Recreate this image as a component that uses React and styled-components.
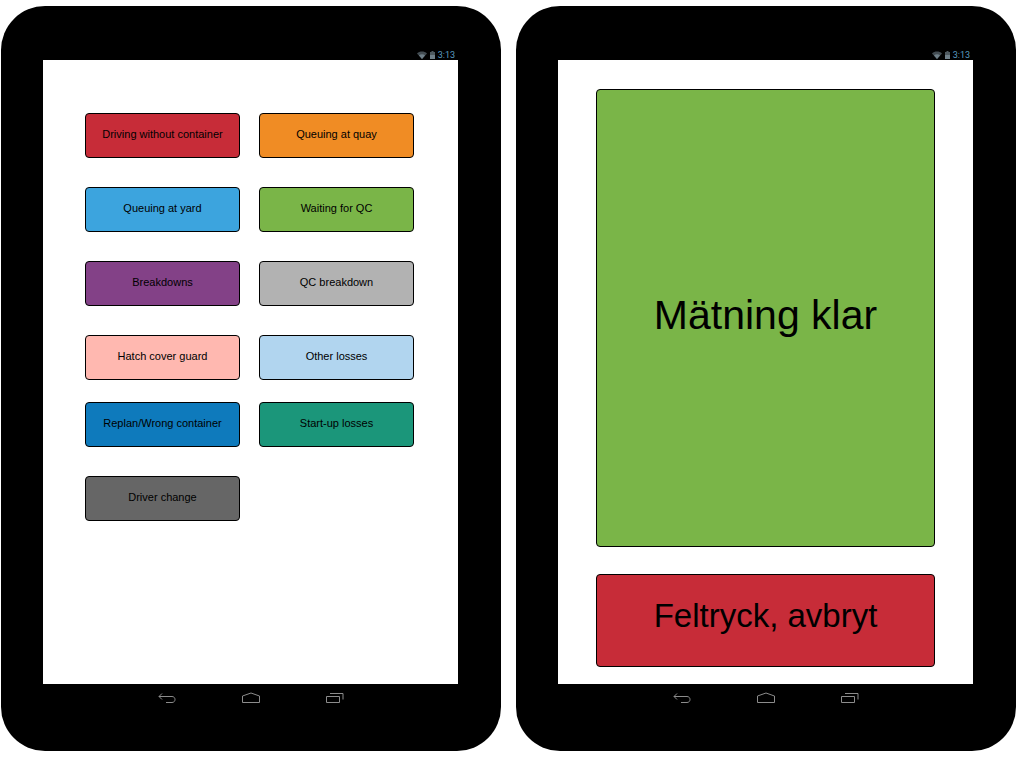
import styled, { createGlobalStyle, ThemeProvider } from "styled-components";

const theme = {
  font: '"Liberation Sans", Arial, sans-serif',
  clockFont: 'Roboto, "Liberation Sans", sans-serif',
  colors: {
    device: "#000000",
    screen: "#ffffff",
    outline: "#000000",
    text: "#000000",
    clock: "#5a9cc0",
    status: "#6f7f88",
    nav: "#8c8c8c",
    red: "#c72c38",
    orange: "#f08c24",
    blue: "#3ca4de",
    green: "#7ab548",
    purple: "#834187",
    grey: "#b2b2b2",
    pink: "#ffb8b0",
    lightBlue: "#b1d5ef",
    darkBlue: "#0e7abc",
    teal: "#1b967a",
    darkGrey: "#666666",
  },
};

const GlobalStyle = createGlobalStyle`
  * {
    box-sizing: border-box;
  }
  body {
    margin: 0;
    background: #ffffff;
    font-family: ${({ theme }) => theme.font};
  }
`;

const Page = styled.main`
  display: grid;
  grid-template-columns: 1fr 1fr;
  gap: 15px;
  padding: 6px 8px 6px 1px;
`;

const Device = styled.section`
  display: flex;
  flex-direction: column;
  padding: 42px 43px 46px 42px;
  border-radius: 44px;
  background: ${({ theme }) => theme.colors.device};
`;

const StatusBar = styled.header`
  display: flex;
  align-items: center;
  justify-content: flex-end;
  gap: 3px;
  height: 12px;
  padding: 2px 3px 0 0;
  color: ${({ theme }) => theme.colors.status};
`;

const Clock = styled.time`
  font-family: ${({ theme }) => theme.clockFont};
  font-size: 9px;
  line-height: 10px;
  color: ${({ theme }) => theme.colors.clock};
`;

const Screen = styled.div`
  display: flex;
  flex-direction: column;
  flex: 1;
  min-height: 624px;
  background: ${({ theme }) => theme.colors.screen};
`;

const NavBar = styled.nav`
  display: flex;
  justify-content: center;
  gap: 66px;
  padding-top: 7px;
`;

const NavButton = styled.button`
  display: flex;
  padding: 0;
  border: 0;
  background: none;
  color: ${({ theme }) => theme.colors.nav};
  cursor: pointer;
`;

const Choices = styled.div`
  display: flex;
  flex-direction: column;
  gap: 22px;
  padding: 53px 44px 0 42px;
`;

const ChoiceGroup = styled.div`
  display: grid;
  grid-template-columns: 1fr 1fr;
  gap: 29px 19px;
`;

const ActionButton = styled.button`
  border: 1px solid ${({ theme }) => theme.colors.outline};
  border-radius: 4px;
  background: ${({ theme, $color }) => theme.colors[$color]};
  color: ${({ theme }) => theme.colors.text};
  font-family: inherit;
  cursor: pointer;
`;

const ChoiceButton = styled(ActionButton)`
  height: 45px;
  padding: 0 0 3px;
  font-size: 11px;
`;

const Actions = styled.div`
  display: flex;
  flex-direction: column;
  flex: 1;
  gap: 27px;
  padding: 29px 38px 17px;
`;

const DoneButton = styled(ActionButton)`
  flex: 1;
  padding: 0 0 5px;
  font-size: 41px;
`;

const CancelButton = styled(ActionButton)`
  height: 93px;
  padding: 0 0 10px;
  font-size: 33px;
`;

const choiceGroups = [
  [
    { label: "Driving without container", color: "red" },
    { label: "Queuing at quay", color: "orange" },
    { label: "Queuing at yard", color: "blue" },
    { label: "Waiting for QC", color: "green" },
    { label: "Breakdowns", color: "purple" },
    { label: "QC breakdown", color: "grey" },
    { label: "Hatch cover guard", color: "pink" },
    { label: "Other losses", color: "lightBlue" },
  ],
  [
    { label: "Replan/Wrong container", color: "darkBlue" },
    { label: "Start-up losses", color: "teal" },
    { label: "Driver change", color: "darkGrey" },
  ],
];

const WifiIcon = () => (
  <svg width="10" height="8" viewBox="0 0 10 8" fill="currentColor" aria-hidden="true">
    <path d="M0 2.4C2.8-.2 7.2-.2 10 2.4L5 8Z" opacity="0.6" />
    <path d="M2 4.4C3.7 3 6.3 3 8 4.4L5 8Z" />
  </svg>
);

const BatteryIcon = () => (
  <svg width="5" height="8" viewBox="0 0 5 8" fill="currentColor" aria-hidden="true">
    <path d="M1.5 0h2v1H5v7H0V1h1.5Z" opacity="0.7" />
    <path d="M0 4h5v4H0Z" />
  </svg>
);

const BackIcon = () => (
  <svg width="18" height="14" viewBox="0 0 18 14" fill="none" stroke="currentColor" aria-hidden="true">
    <path d="M4 2.5L1 5.5L4 8.5M1 5.5H14C18 5.5 18 11.5 14 11.5H8" />
  </svg>
);

const HomeIcon = () => (
  <svg width="18" height="14" viewBox="0 0 18 14" fill="none" stroke="currentColor" aria-hidden="true">
    <path d="M.5 11.5V5L9 2L17.5 5V11.5Z" />
  </svg>
);

const RecentIcon = () => (
  <svg width="18" height="14" viewBox="0 0 18 14" fill="none" stroke="currentColor" aria-hidden="true">
    <path d="M.5 5.5H13.5V11.5H.5ZM4 2.5H17V8.5" />
  </svg>
);

const Tablet = ({ children }) => (
  <Device>
    <StatusBar>
      <WifiIcon />
      <BatteryIcon />
      <Clock>3:13</Clock>
    </StatusBar>
    <Screen>{children}</Screen>
    <NavBar>
      <NavButton aria-label="Back"><BackIcon /></NavButton>
      <NavButton aria-label="Home"><HomeIcon /></NavButton>
      <NavButton aria-label="Recent apps"><RecentIcon /></NavButton>
    </NavBar>
  </Device>
);

const App = () => (
  <ThemeProvider theme={theme}>
    <GlobalStyle />
    <Page>
      <Tablet>
        <Choices>
          {choiceGroups.map((group) => (
            <ChoiceGroup key={group[0].label}>
              {group.map(({ label, color }) => (
                <ChoiceButton key={label} $color={color}>{label}</ChoiceButton>
              ))}
            </ChoiceGroup>
          ))}
        </Choices>
      </Tablet>
      <Tablet>
        <Actions>
          <DoneButton $color="green">Mätning klar</DoneButton>
          <CancelButton $color="red">Feltryck, avbryt</CancelButton>
        </Actions>
      </Tablet>
    </Page>
  </ThemeProvider>
);

export default App;
